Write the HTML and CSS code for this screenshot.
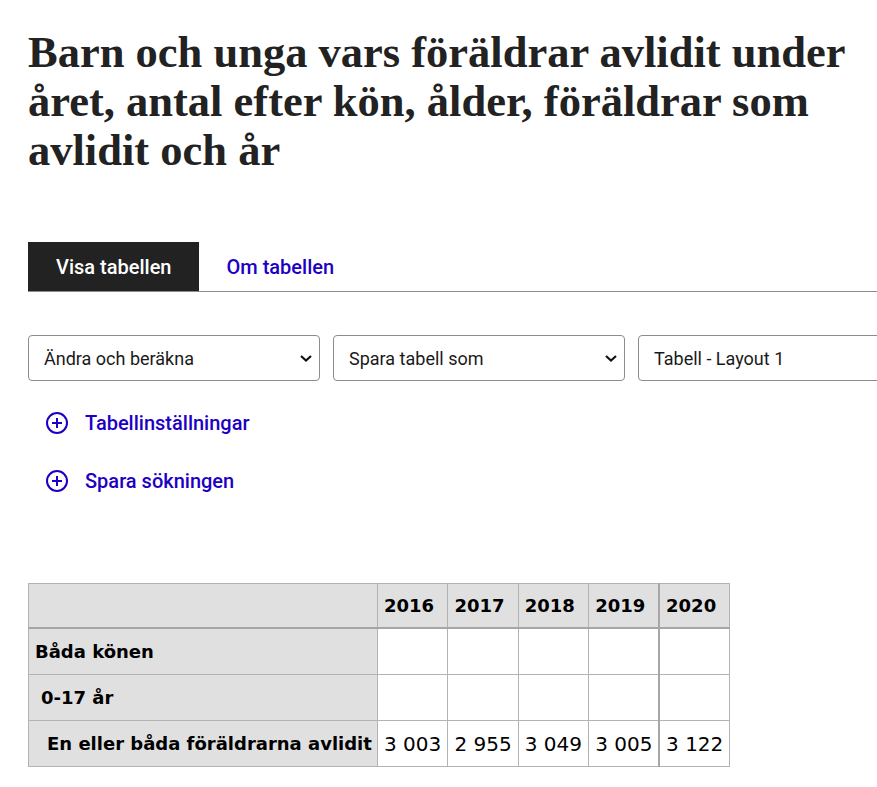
FILE: index.html
```html
<!DOCTYPE html>
<html lang="sv">
<head>
<meta charset="utf-8">
<title>Barn och unga vars föräldrar avlidit</title>
<link rel="stylesheet" href="styles.css">
</head>
<body>
<main class="page">
  <h1 class="title">Barn och unga vars föräldrar avlidit under året, antal efter kön, ålder, föräldrar som avlidit och år</h1>

  <nav class="tabs">
    <span class="tab tab-active">Visa tabellen</span>
    <span class="tab tab-link">Om tabellen</span>
  </nav>

  <div class="controls">
    <div class="select">
      <span>Ändra och beräkna</span>
      <svg class="chev" width="14" height="10" viewBox="0 0 14 10"><path d="M2 3l5 4.5L12 3" fill="none" stroke="#111" stroke-width="2.2"/></svg>
    </div>
    <div class="select">
      <span>Spara tabell som</span>
      <svg class="chev" width="14" height="10" viewBox="0 0 14 10"><path d="M2 3l5 4.5L12 3" fill="none" stroke="#111" stroke-width="2.2"/></svg>
    </div>
    <div class="select select-wide">
      <span>Tabell - Layout 1</span>
    </div>
  </div>

  <div class="expanders">
    <div class="expander">
      <svg class="plus" width="24" height="24" viewBox="0 0 24 24"><circle cx="12" cy="12" r="10" fill="none" stroke="#1d00c4" stroke-width="2"/><path d="M12 7v10M7 12h10" stroke="#1d00c4" stroke-width="2"/></svg>
      <span>Tabellinställningar</span>
    </div>
    <div class="expander">
      <svg class="plus" width="24" height="24" viewBox="0 0 24 24"><circle cx="12" cy="12" r="10" fill="none" stroke="#1d00c4" stroke-width="2"/><path d="M12 7v10M7 12h10" stroke="#1d00c4" stroke-width="2"/></svg>
      <span>Spara sökningen</span>
    </div>
  </div>

  <table class="data">
    <colgroup>
      <col class="col-stub">
      <col><col><col><col><col>
    </colgroup>
    <thead>
      <tr>
        <th class="stub"></th>
        <th>2016</th><th>2017</th><th>2018</th><th>2019</th><th class="sep">2020</th>
      </tr>
    </thead>
    <tbody>
      <tr>
        <th class="lvl1">Båda könen</th>
        <td></td><td></td><td></td><td></td><td class="sep"></td>
      </tr>
      <tr>
        <th class="lvl2">0-17 år</th>
        <td></td><td></td><td></td><td></td><td class="sep"></td>
      </tr>
      <tr>
        <th class="lvl3">En eller båda föräldrarna avlidit</th>
        <td>3 003</td><td>2 955</td><td>3 049</td><td>3 005</td><td class="sep">3 122</td>
      </tr>
    </tbody>
  </table>
</main>
</body>
</html>
```

FILE: styles.css
```css
html, body {
  margin: 0;
  padding: 0;
  background: #fff;
}
body {
  overflow: hidden;
}
.page {
  padding: 0 0 0 28px;
  font-family: Roboto, "Liberation Sans", sans-serif;
  color: #1a1a1a;
}
.title {
  margin: 0;
  padding-top: 28px;
  font-family: "Liberation Serif", serif;
  font-weight: bold;
  font-size: 44.5px;
  line-height: 49px;
  color: #222;
  max-width: 840px;
}
.tabs {
  display: flex;
  margin-top: 67px;
  border-bottom: 1px solid #8c8c8c;
  height: 49px;
}
.tab {
  display: flex;
  align-items: center;
  font-size: 20px;
  font-weight: 500;
  padding: 0 27px 0 28px;
}
.tab-active {
  background: #222;
  color: #fff;
}
.tab-link {
  color: #1d00c4;
}
.controls {
  display: flex;
  gap: 13px;
  margin-top: 43px;
}
.select {
  box-sizing: border-box;
  width: 292px;
  height: 46px;
  border: 1px solid #8c8c8c;
  border-radius: 4px;
  display: flex;
  align-items: center;
  justify-content: space-between;
  padding: 0 6px 0 15px;
  font-size: 18px;
  color: #1a1a1a;
  flex-shrink: 0;
}
.select-wide {
  width: 300px;
}
.chev {
  display: block;
}
.expanders {
  display: flex;
  flex-direction: column;
  gap: 34px;
  margin-top: 30px;
  padding-left: 17px;
}
.expander {
  display: flex;
  align-items: center;
  gap: 16px;
  color: #1d00c4;
  font-size: 20px;
  font-weight: 500;
  height: 24px;
}
.plus {
  display: block;
}
.data {
  margin-top: 90px;
  border-collapse: collapse;
  table-layout: fixed;
  width: 702px;
  font-family: "DejaVu Sans", Verdana, sans-serif;
  color: #000;
}
.col-stub {
  width: 349px;
}
.data th, .data td {
  border: 1px solid #b3b3b3;
  height: 45px;
  padding: 0 6px;
  text-align: left;
  vertical-align: middle;
  white-space: nowrap;
}
.data th {
  background: #e0e0e0;
  font-weight: bold;
  font-size: 18px;
}
.data thead th {
  border-bottom: 2px solid #a6a6a6;
  height: 43px;
}
.data td {
  font-size: 20px;
  background: #fff;
  padding: 0 4px 0 6px;
}
.data .sep {
  border-left: 2px solid #a6a6a6;
}
.data th.lvl1 { padding-left: 6px; }
.data th.lvl2 { padding-left: 12px; }
.data th.lvl3 { padding-left: 18px; }
```
